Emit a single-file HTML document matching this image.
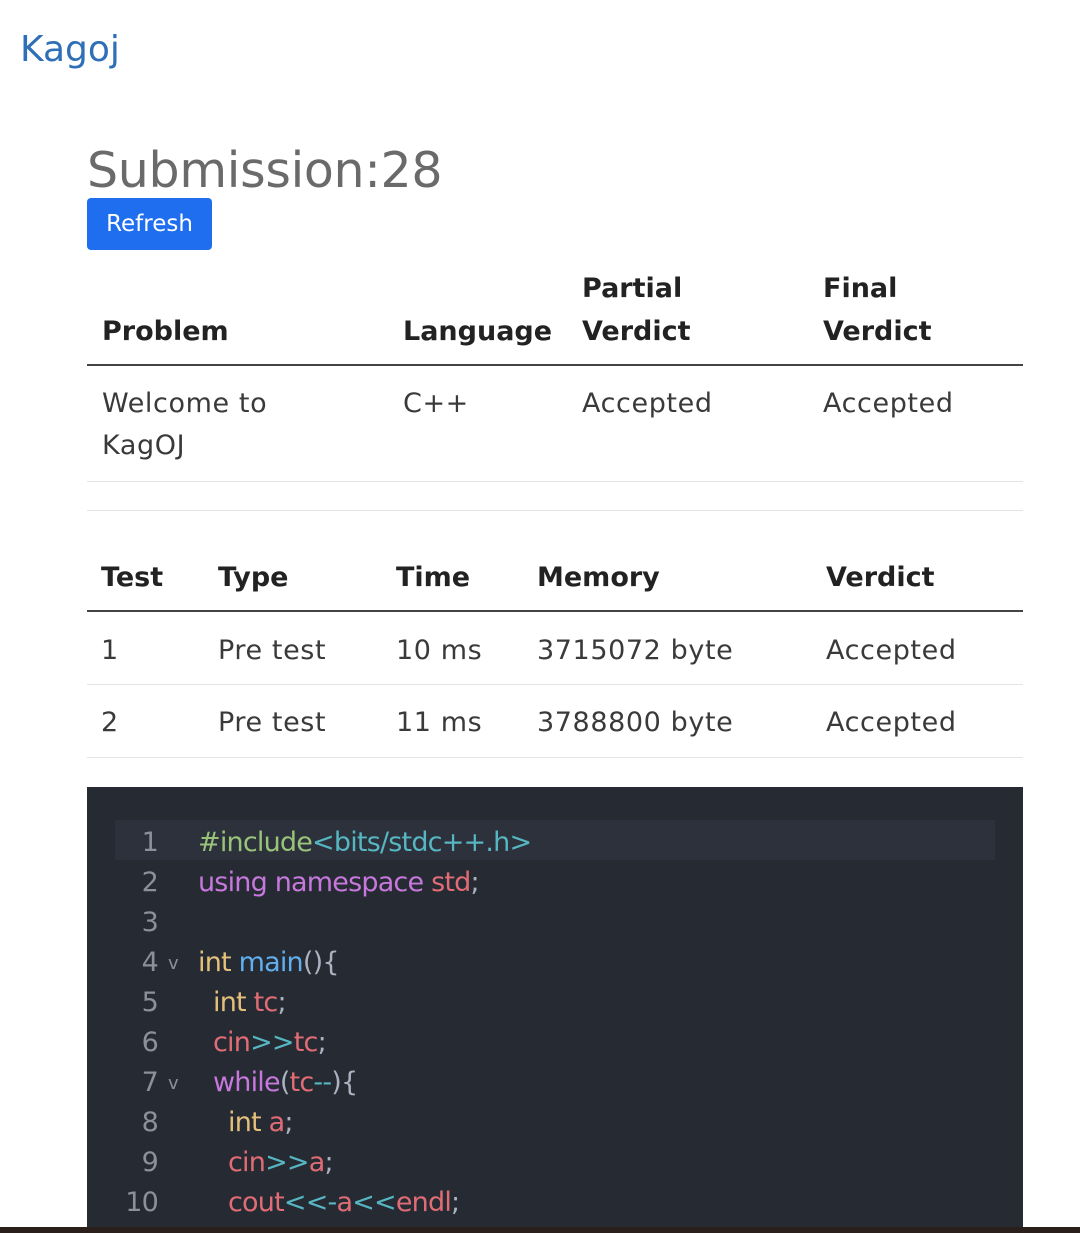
<!DOCTYPE html>
<html><head><meta charset="utf-8"><style>
*{margin:0;padding:0;box-sizing:border-box}
body{width:1080px;height:1233px;background:#fff;position:relative;overflow:hidden;font-family:"DejaVu Sans","Liberation Sans",sans-serif}
.a{position:absolute;white-space:nowrap;line-height:1}
.t{font-size:27px;color:#3a3a3a;letter-spacing:0.6px}
.h{font-size:27px;color:#222;font-weight:bold;letter-spacing:0px}
.ln{position:absolute;left:87px;width:936px}
.code{position:absolute;left:87px;top:787px;width:936px;height:440px;background:#262a33}
.c{position:absolute;font-size:27px;line-height:1;white-space:nowrap;letter-spacing:-0.8px}
.n{color:#8b909a;text-align:right;width:60px;left:11px}
</style></head><body>
<div class="a" style="left:20px;top:32px;font-size:36px;color:#2f6fb8">Kagoj</div>
<div class="a" style="left:87px;top:146px;font-size:49px;color:#6a6a6a;letter-spacing:-0.3px">Submission:28</div>
<div class="a" style="left:87px;top:198px;width:125px;height:52px;background:#1f6ef0;border-radius:4px;color:#fff;font-size:23px;line-height:52px;text-align:center">Refresh</div>

<div class="a h" style="left:582px;top:275px">Partial</div>
<div class="a h" style="left:823px;top:275px">Final</div>
<div class="a h" style="left:102px;top:318px">Problem</div>
<div class="a h" style="left:403px;top:318px">Language</div>
<div class="a h" style="left:582px;top:318px">Verdict</div>
<div class="a h" style="left:823px;top:318px">Verdict</div>
<div class="ln" style="top:364px;height:2px;background:#444"></div>
<div class="a t" style="left:102px;top:390px">Welcome to</div>
<div class="a t" style="left:102px;top:432px">KagOJ</div>
<div class="a t" style="left:403px;top:390px">C++</div>
<div class="a t" style="left:582px;top:390px">Accepted</div>
<div class="a t" style="left:823px;top:390px">Accepted</div>
<div class="ln" style="top:481px;height:1px;background:#e4e4e4"></div>
<div class="ln" style="top:510px;height:1px;background:#e4e4e4"></div>

<div class="a h" style="left:101px;top:564px">Test</div>
<div class="a h" style="left:218px;top:564px">Type</div>
<div class="a h" style="left:396px;top:564px">Time</div>
<div class="a h" style="left:537px;top:564px">Memory</div>
<div class="a h" style="left:826px;top:564px">Verdict</div>
<div class="ln" style="top:610px;height:2px;background:#444"></div>
<div class="a t" style="left:101px;top:637px">1</div>
<div class="a t" style="left:218px;top:637px">Pre test</div>
<div class="a t" style="left:396px;top:637px">10 ms</div>
<div class="a t" style="left:537px;top:637px">3715072 byte</div>
<div class="a t" style="left:826px;top:637px">Accepted</div>
<div class="ln" style="top:684px;height:1px;background:#e4e4e4"></div>
<div class="a t" style="left:101px;top:709px">2</div>
<div class="a t" style="left:218px;top:709px">Pre test</div>
<div class="a t" style="left:396px;top:709px">11 ms</div>
<div class="a t" style="left:537px;top:709px">3788800 byte</div>
<div class="a t" style="left:826px;top:709px">Accepted</div>
<div class="ln" style="top:757px;height:1px;background:#e4e4e4"></div>

<div class="code">
<div style="position:absolute;left:28px;top:33px;width:880px;height:40px;background:#2c313b"></div>
<div class="c n" style="top:42px">1</div>
<div class="c" style="left:111px;top:42px"><span style="color:#98c379">#include</span><span style="color:#56b6c2">&lt;bits/stdc++.h&gt;</span></div>
<div class="c n" style="top:82px">2</div>
<div class="c" style="left:111px;top:82px"><span style="color:#c678dd">using namespace </span><span style="color:#e06c75">std</span><span style="color:#abb2bf">;</span></div>
<div class="c n" style="top:122px">3</div>
<div class="c n" style="top:162px;width:60px;left:11px">4</div><div class="c" style="left:81px;top:168px;font-size:18px;color:#8b909a">v</div>
<div class="c" style="left:111px;top:162px"><span style="color:#e5c07b">int </span><span style="color:#61afef">main</span><span style="color:#abb2bf">(){</span></div>
<div class="c n" style="top:202px">5</div>
<div class="c" style="left:126px;top:202px"><span style="color:#e5c07b">int </span><span style="color:#e06c75">tc</span><span style="color:#abb2bf">;</span></div>
<div class="c n" style="top:242px">6</div>
<div class="c" style="left:126px;top:242px"><span style="color:#e06c75">cin</span><span style="color:#56b6c2">&gt;&gt;</span><span style="color:#e06c75">tc</span><span style="color:#abb2bf">;</span></div>
<div class="c n" style="top:282px;width:60px;left:11px">7</div><div class="c" style="left:81px;top:288px;font-size:18px;color:#8b909a">v</div>
<div class="c" style="left:126px;top:282px"><span style="color:#c678dd">while</span><span style="color:#abb2bf">(</span><span style="color:#e06c75">tc</span><span style="color:#56b6c2">--</span><span style="color:#abb2bf">){</span></div>
<div class="c n" style="top:322px">8</div>
<div class="c" style="left:141px;top:322px"><span style="color:#e5c07b">int </span><span style="color:#e06c75">a</span><span style="color:#abb2bf">;</span></div>
<div class="c n" style="top:362px">9</div>
<div class="c" style="left:141px;top:362px"><span style="color:#e06c75">cin</span><span style="color:#56b6c2">&gt;&gt;</span><span style="color:#e06c75">a</span><span style="color:#abb2bf">;</span></div>
<div class="c n" style="top:402px">10</div>
<div class="c" style="left:141px;top:402px"><span style="color:#e06c75">cout</span><span style="color:#56b6c2">&lt;&lt;-</span><span style="color:#e06c75">a</span><span style="color:#56b6c2">&lt;&lt;</span><span style="color:#e06c75">endl</span><span style="color:#abb2bf">;</span></div>
</div>
<div style="position:absolute;left:0;top:1227px;width:1080px;height:6px;background:#2a1f1a"></div>
</body></html>
